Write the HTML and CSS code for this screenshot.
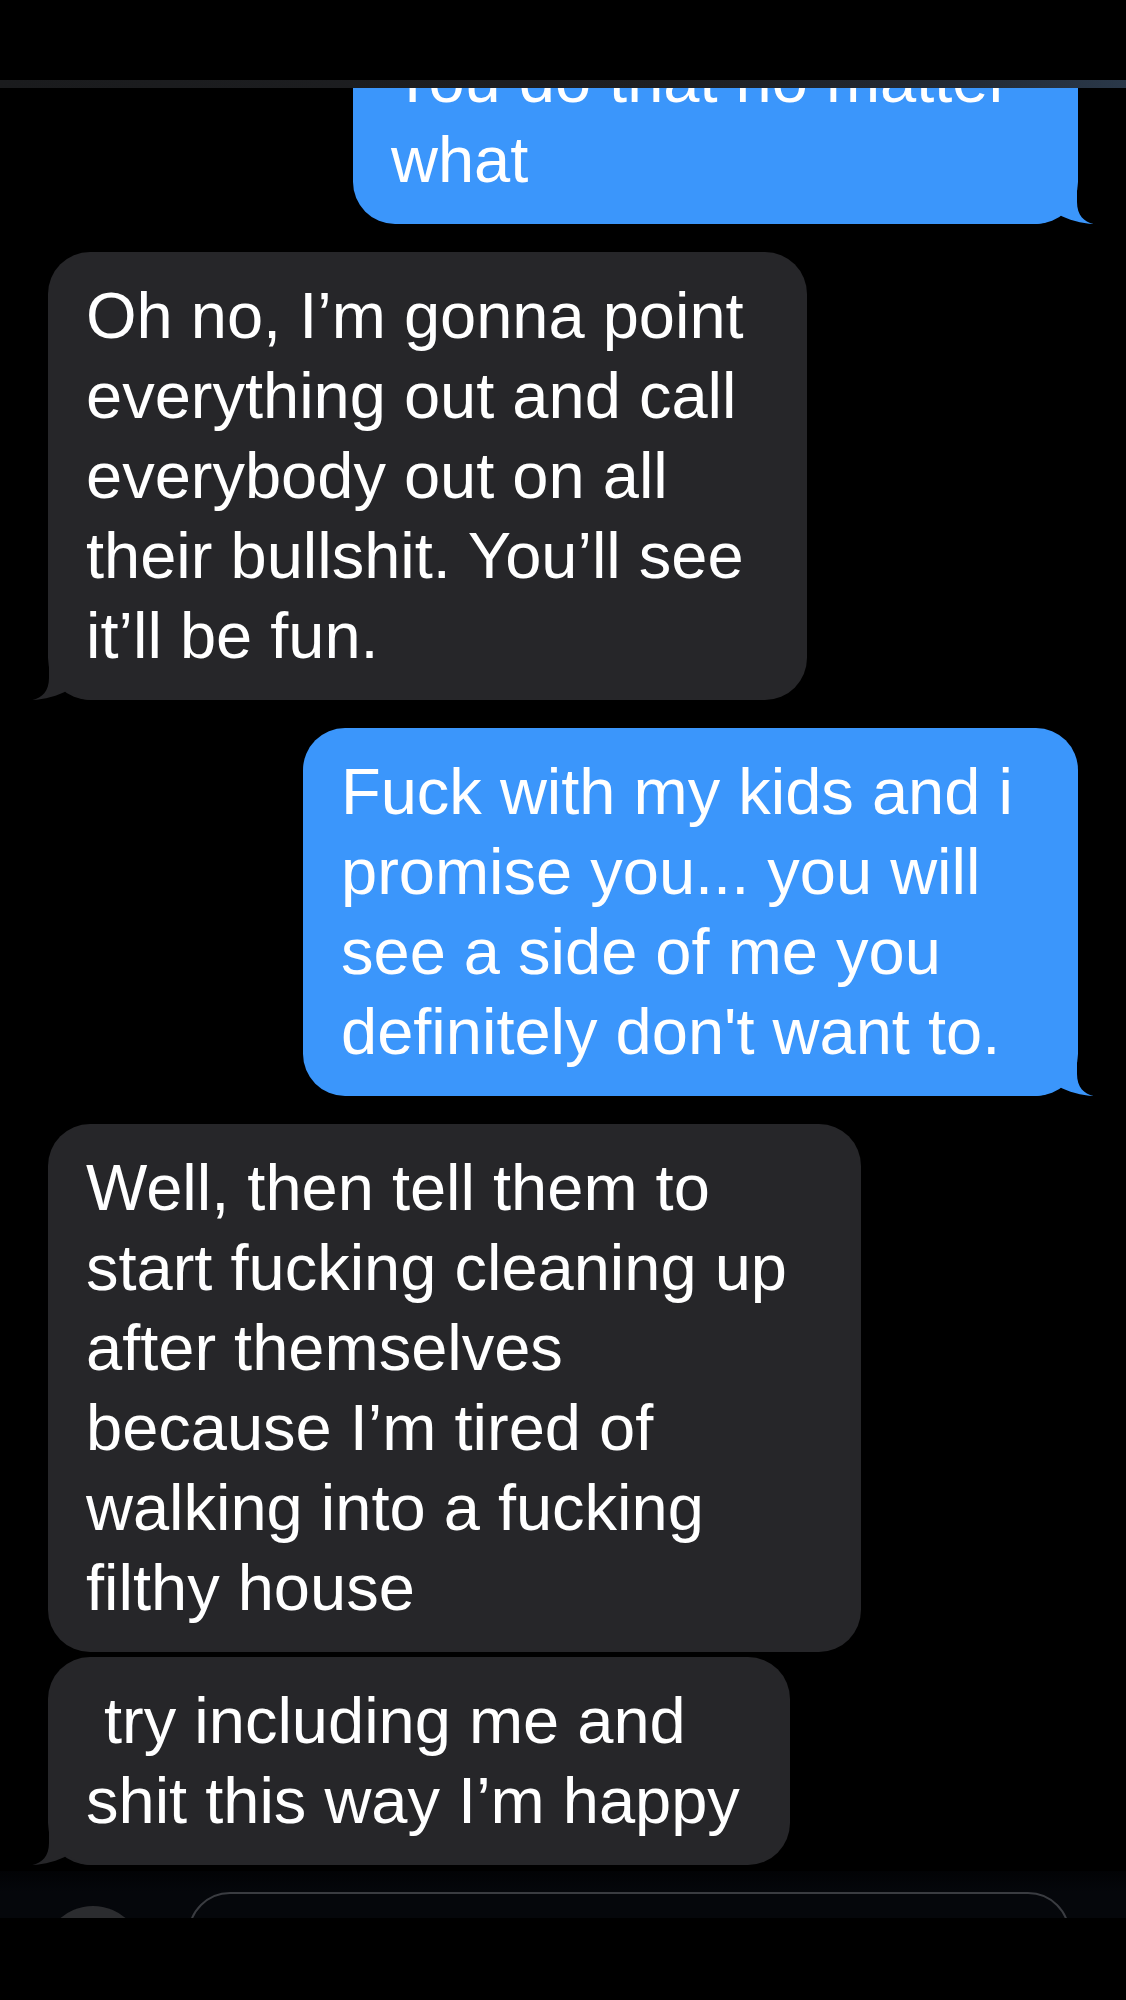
FILE: index.html
```html
<!DOCTYPE html>
<html lang="en">
<head>
<meta charset="utf-8">
<title>Messages</title>
<link rel="stylesheet" href="styles.css">
</head>
<body>
<div class="screen">
  <div class="navbar"></div>
  <div class="thread">
    <div class="bubble me w-b1">
      <p>You do that no matter<br>what</p>
      <svg class="tail" viewBox="0 0 58 44" width="58" height="44"><path d="M0,0 H41 V22 C41,35 48,42 57.5,44 C46,43.5 32,40 22,34 C16,40 8,44 0,44 Z"/></svg>
    </div>
    <div class="bubble them w-g1">
      <p>Oh no, I’m gonna point<br>everything out and call<br>everybody out on all<br>their bullshit. You’ll see<br>it’ll be fun.</p>
      <svg class="tail" viewBox="0 0 58 44" width="58" height="44"><path d="M0,0 H41 V22 C41,35 48,42 57.5,44 C46,43.5 32,40 22,34 C16,40 8,44 0,44 Z"/></svg>
    </div>
    <div class="bubble me w-b2">
      <p>Fuck with my kids and i<br>promise you... you will<br>see a side of me you<br>definitely don't want to.</p>
      <svg class="tail" viewBox="0 0 58 44" width="58" height="44"><path d="M0,0 H41 V22 C41,35 48,42 57.5,44 C46,43.5 32,40 22,34 C16,40 8,44 0,44 Z"/></svg>
    </div>
    <div class="bubble them w-g2">
      <p>Well, then tell them to<br>start fucking cleaning up<br>after themselves<br>because I’m tired of<br>walking into a fucking<br>filthy house</p>
    </div>
    <div class="bubble them w-g3 cont">
      <p>&nbsp;try including me and<br>shit this way I’m happy</p>
      <svg class="tail" viewBox="0 0 58 44" width="58" height="44"><path d="M0,0 H41 V22 C41,35 48,42 57.5,44 C46,43.5 32,40 22,34 C16,40 8,44 0,44 Z"/></svg>
    </div>
  </div>
  <div class="composer">
    <div class="apps-btn"></div>
    <div class="field"></div>
  </div>
</div>
</body>
</html>
```

FILE: styles.css
```css
html, body {
  margin: 0;
  padding: 0;
  background: #000;
}

.screen {
  position: relative;
  width: 1126px;
  height: 2000px;
  background: #000;
  overflow: hidden;
  font-family: "Liberation Sans", Arial, sans-serif;
}

.navbar {
  position: absolute;
  top: 0;
  left: 0;
  right: 0;
  height: 80px;
  background: #000;
  border-bottom: 8px solid transparent;
  border-image: linear-gradient(90deg, #1a1b1d 0%, #1e1f22 60%, #222a35 85%, #2a3849 100%) 1;
  z-index: 5;
}

.thread {
  display: flex;
  flex-direction: column;
  padding: 16px 48px 0;
}

.bubble {
  position: relative;
  box-sizing: border-box;
  border-radius: 42px;
  padding: 24px 20px 24px 38px;
  color: #fff;
  margin-top: 28px;
}

.bubble:first-child {
  margin-top: 0;
}

.bubble.cont {
  margin-top: 5px;
}

.bubble p {
  margin: 0;
  font-size: 65px;
  line-height: 80px;
  white-space: nowrap;
  position: relative;
  z-index: 1;
}

.me {
  align-self: flex-end;
  background: #3b96fb;
}

.them {
  align-self: flex-start;
  background: #262629;
}

.tail {
  position: absolute;
  bottom: 0;
  display: block;
}

.me .tail {
  right: -16px;
  fill: #3b96fb;
}

.them .tail {
  left: -16px;
  transform: scaleX(-1);
  fill: #262629;
}

.w-b1 { width: 725px; }
.w-g1 { width: 759px; }
.w-b2 { width: 775px; }
.w-g2 { width: 813px; }
.w-g3 { width: 742px; }

.composer {
  position: relative;
  margin-top: 6px;
  height: 47px;
  overflow: hidden;
  display: flex;
  align-items: flex-start;
  padding-left: 43px;
  background: linear-gradient(180deg, #020305 0%, #05070b 45%, #05070b 100%);
}

.apps-btn {
  flex: none;
  width: 100px;
  height: 100px;
  margin-top: 35px;
  border-radius: 50%;
  background: #2b2c2f;
}

.field {
  flex: none;
  box-sizing: border-box;
  width: 882px;
  height: 90px;
  margin-top: 21px;
  margin-left: 45px;
  border: 2px solid #3a3c41;
  border-radius: 42px;
  background: #05070b;
}
```
